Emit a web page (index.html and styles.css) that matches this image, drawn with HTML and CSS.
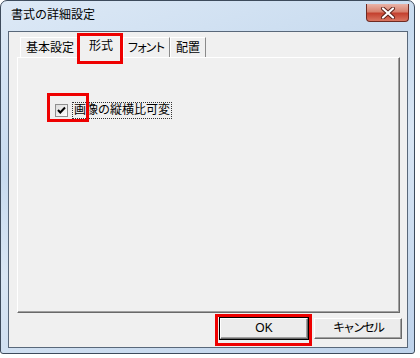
FILE: index.html
```html
<!DOCTYPE html>
<html lang="ja">
<head>
    <meta charset="UTF-8">
    <title>書式の詳細設定</title>
    <link rel="stylesheet" href="styles.css">
</head>
<body>
    <div class="window">
        <div class="titlebar">
            <span class="title">書式の詳細設定</span>
            <div class="close">
                <svg width="16" height="12" viewBox="0 0 16 12">
                    <path d="M3 1.5 L13 10.5 M13 1.5 L3 10.5" stroke="#5a1f18" stroke-width="4" stroke-linecap="round"/>
                    <path d="M3 1.5 L13 10.5 M13 1.5 L3 10.5" stroke="#fff" stroke-width="2.2" stroke-linecap="round"/>
                </svg>
            </div>
        </div>
        <div class="client">
            <div class="tabs">
                <div class="tab">基本設定</div>
                <div class="tab selected">形式</div>
                <div class="tab kana">フォント</div>
                <div class="tab">配置</div>
            </div>
            <div class="panel">
                <div class="check">
                    <span class="box">
                        <svg width="11" height="11" viewBox="0 0 11 11">
                            <path d="M2 5 L4.3 7.5 L9 2.5" fill="none" stroke="#000" stroke-width="2"/>
                        </svg>
                    </span>
                    <span class="label">画像の縦横比可変</span>
                </div>
            </div>
            <div class="buttons">
                <div class="btn default">OK</div>
                <div class="btn kana">キャンセル</div>
            </div>
        </div>
        <!-- 赤枠 -->
        <div class="mark mark-tab"></div>
        <div class="mark mark-check"></div>
        <div class="mark mark-ok"></div>
    </div>
</body>
</html>
```
FILE: styles.css
```css
body {
    margin: 0;
    background-color: #fff;
    font-family: "Liberation Sans", "Noto Sans CJK JP", sans-serif;
    font-size: 12px;
    color: #000;
}

.window {
    position: relative;
    width: 413px;
    height: 352px;
    border: 1px solid #3d4b5c;
    border-radius: 7px 7px 3px 3px;
    background: linear-gradient(160deg, #dde9f6 0%, #c8dbef 35%, #d9e6f4 55%, #bed3eb 100%);
    display: flex;
    flex-direction: column;
}

.titlebar {
    height: 30px;
    display: flex;
    align-items: flex-start;
}

.title {
    margin: 6px 0 0 10px;
    line-height: 16px;
    font-size: 12px;
}

.close {
    width: 43px;
    height: 18px;
    margin: 3px 5px 0 auto;
    box-sizing: border-box;
    border: 1px solid #6e2a22;
    border-top: none;
    border-radius: 0 0 4px 4px;
    background: linear-gradient(#eab4a8, #d8826f 45%, #c4412f 55%, #d97561);
    display: flex;
    align-items: center;
    justify-content: center;
}

.client {
    flex: 1;
    margin: 0 6px 5px 7px;
    border: 1px solid #59687a;
    background-color: #f0f0f0;
    padding: 2px 7px 0 8px;
    display: flex;
    flex-direction: column;
}

.tabs {
    height: 23px;
    display: flex;
    align-items: flex-end;
    padding-left: 3px;
}

.tab {
    height: 20px;
    line-height: 20px;
    padding: 0 5px;
    box-sizing: border-box;
    border-top: 1px solid #fff;
    border-left: 1px solid #fff;
    border-right: 1px solid #8a8a8a;
}

.tab.selected {
    height: 23px;
    line-height: 21px;
    padding: 0 9px;
    margin: 0 0 -1px -1px;
    background-color: #f0f0f0;
    position: relative;
}

.tab.kana {
    letter-spacing: -3px;
    padding: 0 6px 0 3px;
}

.panel {
    height: 256px;
    box-sizing: border-box;
    border: 1px solid #fff;
    border-right-color: #696969;
    border-bottom-color: #696969;
    box-shadow: inset -1px -1px 0 #a0a0a0;
    padding: 44px 0 0 37px;
}

.check {
    display: flex;
    align-items: center;
    gap: 4px;
}

.box {
    width: 13px;
    height: 13px;
    box-sizing: border-box;
    border: 1px solid #8f8f8f;
    background: linear-gradient(135deg, #dcdcdc, #fff);
    display: flex;
    align-items: center;
    justify-content: center;
}

.label {
    border: 1px dotted #333;
    padding: 0 1px;
    line-height: 15px;
}

.buttons {
    display: flex;
    justify-content: flex-end;
    gap: 6px;
    margin: 5px -2px 0 0;
}

.btn {
    width: 88px;
    height: 21px;
    box-sizing: border-box;
    border: 1px solid #fff;
    border-right-color: #696969;
    border-bottom-color: #696969;
    box-shadow: inset -1px -1px 0 #a0a0a0;
    background-color: #ececec;
    text-align: center;
    line-height: 18px;
}

.btn.default {
    outline: 1px solid #000;
}

.btn.kana {
    letter-spacing: -2px;
}

.mark {
    position: absolute;
    box-sizing: border-box;
    border: 3px solid #ee0000;
}

.mark-tab {
    left: 76px;
    top: 32px;
    width: 46px;
    height: 31px;
}

.mark-check {
    left: 46px;
    top: 92px;
    width: 42px;
    height: 29px;
}

.mark-ok {
    left: 214px;
    top: 313px;
    width: 97px;
    height: 32px;
}
```
